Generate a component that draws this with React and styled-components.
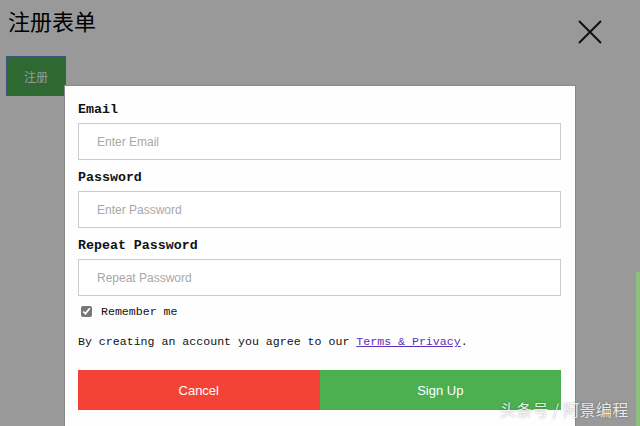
import React from 'react';
import styled, { createGlobalStyle } from 'styled-components';

const GlobalStyle = createGlobalStyle`
  html, body {
    margin: 0;
    padding: 0;
    background: #fff;
    font-family: "Liberation Serif", "Noto Sans CJK SC", serif;
  }
`;

const Page = styled.div`
  position: relative;
  width: 640px;
  height: 426px;
  overflow: hidden;
  padding: 6px 6px 0 6px;
  box-sizing: border-box;
`;

const Title = styled.h2`
  margin: 0 0 0 2px;
  font-family: "Noto Sans CJK SC", sans-serif;
  font-weight: 400;
  font-size: 22px;
  line-height: 28px;
  color: #000;
`;

const OpenButton = styled.button`
  margin-top: 22px;
  width: 60px;
  height: 40px;
  background: #4caf50;
  color: #fff;
  border: 1px solid #6a8fd0;
  font-family: "Noto Sans CJK SC", sans-serif;
  font-size: 12px;
  padding: 0;
`;

const Overlay = styled.div`
  position: absolute;
  inset: 0;
  background: rgba(0, 0, 0, 0.4);
  padding-top: 85px;
  box-sizing: border-box;
`;

const Close = styled.button`
  position: absolute;
  top: 19px;
  left: 577px;
  width: 26px;
  height: 26px;
  padding: 0;
  border: 0;
  background: none;
`;

const Modal = styled.form`
  margin-left: 64px;
  width: 512px;
  height: 341px;
  background: #fefefe;
  border: 1px solid #888;
  border-bottom: 0;
  box-sizing: border-box;
  padding: 6px 14px 0 13px;
`;

const Label = styled.label`
  display: block;
  font-family: "Liberation Mono", monospace;
  font-weight: 700;
  font-size: 13.3px;
  line-height: 16px;
  color: #111;
  margin: 10px 0 5px 0;
`;

const Input = styled.input`
  display: block;
  width: 100%;
  height: 37px;
  box-sizing: border-box;
  border: 1px solid #ccc;
  background: #fff;
  padding: 0 18px;
  margin: 0;
  font-family: "Liberation Sans", Arial, sans-serif;
  font-size: 12px;
  outline: none;
  &::placeholder {
    color: #a8a8a8;
  }
`;

const CheckRow = styled.label`
  display: flex;
  align-items: center;
  height: 16px;
  margin-top: 7px;
  font-family: "Liberation Mono", monospace;
  font-size: 11.6px;
  color: #111;
  input {
    width: 11px;
    height: 11px;
    margin: 0 9px 0 3px;
    accent-color: #777;
  }
`;

const Terms = styled.p`
  margin: 15px 0 0 0;
  font-family: "Liberation Mono", monospace;
  font-size: 11.6px;
  line-height: 16px;
  color: #111;
  a {
    color: #5b2fbf;
    text-decoration: underline;
  }
`;

const Buttons = styled.div`
  display: flex;
  margin-top: 20px;
`;

const ActionButton = styled.button`
  flex: 1;
  height: 40px;
  border: 0;
  padding: 0;
  color: #fff;
  background: ${p => (p.$cancel ? '#f44336' : '#4caf50')};
  font-family: "Liberation Sans", Arial, sans-serif;
  font-size: 13px;
`;

const Strip = styled.div`
  position: absolute;
  right: 0;
  top: 272px;
  width: 4px;
  height: 154px;
  background: #8fbf80;
`;

const Watermark = styled.div`
  position: absolute;
  left: 500px;
  top: 398px;
  font-family: "Noto Sans CJK SC", sans-serif;
  font-size: 16px;
  line-height: 22px;
  color: rgba(255, 255, 255, 0.85);
  text-shadow: 0 0 2px rgba(0, 0, 0, 0.35);
  letter-spacing: 0.3px;
`;

export default function App() {
  return (
    <>
      <GlobalStyle />
      <Page>
        <Title>注册表单</Title>
        <OpenButton type="button">注册</OpenButton>
        <Overlay>
          <Close type="button" aria-label="close">
            <svg width="26" height="26" viewBox="0 0 26 26">
              <path d="M2 2 L24 24 M24 2 L2 24" stroke="#111" strokeWidth="2" fill="none" />
            </svg>
          </Close>
          <Modal onSubmit={e => e.preventDefault()}>
            <Label>Email</Label>
            <Input type="text" placeholder="Enter Email" />
            <Label>Password</Label>
            <Input type="password" placeholder="Enter Password" />
            <Label>Repeat Password</Label>
            <Input type="password" placeholder="Repeat Password" />
            <CheckRow>
              <input type="checkbox" defaultChecked />
              Remember me
            </CheckRow>
            <Terms>
              By creating an account you agree to our <a href="#">Terms &amp; Privacy</a>.
            </Terms>
            <Buttons>
              <ActionButton type="button" $cancel>Cancel</ActionButton>
              <ActionButton type="submit">Sign Up</ActionButton>
            </Buttons>
          </Modal>
          <Strip />
          <Watermark>头条号 / 阿景编程</Watermark>
        </Overlay>
      </Page>
    </>
  );
}
